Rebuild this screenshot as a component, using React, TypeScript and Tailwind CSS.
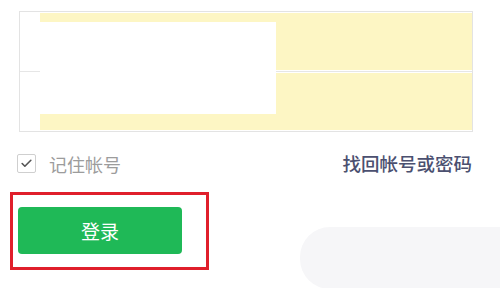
import { Check } from 'lucide-react';

const App = () => {
  return (
    <div
      className="relative w-[500px] h-[288px] overflow-hidden bg-white"
      style={{ fontFamily: '"Noto Sans CJK SC", "Noto Sans", sans-serif' }}
    >
      {/* account / password fields */}
      <div className="pt-[11px] pl-[19px]">
        <div className="relative w-[454px] h-[121px] border border-[#e3e3e3] flex flex-col">
          <div className="h-[58px] pl-[20px] pt-[1px] flex">
            <div className="flex-1 bg-[#fdf6c4]" />
          </div>
          <div className="h-[3px] flex items-center">
            <div className="w-full h-px bg-[#e6e6e6]" />
          </div>
          <div className="flex-1 pl-[20px] pb-[1px] flex">
            <div className="flex-1 bg-[#fdf6c4]" />
          </div>
          {/* redacted block */}
          <div className="absolute left-[20px] top-[10px] w-[236px] h-[92px] bg-white" />
        </div>
      </div>

      {/* remember + recover */}
      <div className="mt-[22px] pl-[17px] pr-[28px] flex items-center justify-between">
        <div className="flex items-center gap-[13px]">
          <div className="w-[19px] h-[19px] border border-[#cfcfcf] rounded-[2px] flex items-center justify-center">
            <Check className="w-[13px] h-[13px] text-[#555]" strokeWidth={3} />
          </div>
          <span className="text-[18px] leading-none text-[#9c9c9c]">记住帐号</span>
        </div>
        <span className="text-[18.5px] leading-none font-medium text-[#4b5070]">找回帐号或密码</span>
      </div>

      {/* login button */}
      <div className="mt-[19px] ml-[10px] w-[199px] h-[78px] border-[3px] border-[#e01f2b] pl-[5px] pt-[12px]">
        <button className="w-[164px] h-[47px] rounded-[4px] bg-[#1fb957] text-white text-[19px] leading-none flex items-center justify-center">
          登录
        </button>
      </div>

      {/* faint pill at bottom right */}
      <div className="absolute left-[300px] top-[227px] w-[240px] h-[62px] rounded-[30px] bg-[#f6f6f8]" />
    </div>
  );
};

export default App;
